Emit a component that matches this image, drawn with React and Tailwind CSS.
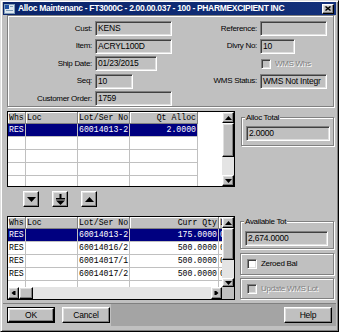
import React from 'react';

// Win classic bevels
const raised = 'border border-t-white border-l-white border-r-black border-b-black shadow-[inset_-1px_-1px_0_#808080,inset_1px_1px_0_#dfdfdf]';
const sunken = 'border border-t-[#808080] border-l-[#808080] border-r-white border-b-white shadow-[inset_1px_1px_0_#404040,inset_-1px_-1px_0_#dfdfdf]';
const etched = 'border border-[#808080] shadow-[inset_1px_1px_0_#fff,1px_1px_0_#fff]';
const mono = "font-['Liberation_Mono','Courier_New',monospace] text-[8.2px]";
const dis = 'text-[#808080] [text-shadow:1px_1px_0_#fff]';
const lbl = 'text-[8px] tracking-[-0.3px] whitespace-nowrap';

const Tri = ({ dir }) => (
  <svg width="7" height="4" viewBox="0 0 7 4">
    {dir === 'up' && <polygon points="3.5,0 7,4 0,4" fill="#000" />}
    {dir === 'down' && <polygon points="0,0 7,0 3.5,4" fill="#000" />}
    {dir === 'left' && <polygon points="4,0 4,7 0,3.5" fill="#000" transform="translate(1.5,-1.5)" />}
    {dir === 'right' && <polygon points="0,0 4,3.5 0,7" fill="#000" transform="translate(1.5,-1.5)" />}
  </svg>
);

const ScrollBtn = ({ dir, cls }) => (
  <div className={`${raised} ${cls} bg-[#c0c0c0] flex items-center justify-center shrink-0`}>
    <Tri dir={dir} />
  </div>
);

const Field = ({ w, children, white }) => (
  <div className={`${sunken} ${w} h-[15px] ${white ? 'bg-white' : 'bg-[#c0c0c0]'} pl-[2px] text-[8.5px] leading-[13px] whitespace-nowrap overflow-hidden tracking-[-0.2px]`}>
    {children}
  </div>
);

const Row = ({ label, lw, children }) => (
  <div className="flex items-center h-[15px]">
    <span className={`${lw} text-right pr-[3px] ${lbl}`}>{label}</span>
    {children}
  </div>
);

const Check = ({ disabled }) => (
  <div className={`${sunken} w-[10px] h-[10px] shrink-0 ${disabled ? 'bg-[#c0c0c0]' : 'bg-white'}`} />
);

const topCols = [
  { w: 'w-[18px]', label: 'Whs' },
  { w: 'w-[52px]', label: 'Loc' },
  { w: 'w-[52px]', label: 'Lot/Ser No' },
  { w: 'w-[68px]', label: 'Qt Alloc', right: true },
];
const topRows = [['RES', '', '60014013-2', '2.0000'], ['', '', '', ''], ['', '', '', ''], ['', '', '', ''], ['', '', '', '']];

const botCols = [
  { w: 'w-[18px]', label: 'Whs' },
  { w: 'w-[52px]', label: 'Loc' },
  { w: 'w-[52px]', label: 'Lot/Ser No' },
  { w: 'w-[89px]', label: 'Curr Qty', right: true },
  { w: 'w-[12px]', label: 'L' },
];
const botRows = [
  ['RES', '', '60014013-2', '175.0000', '0'],
  ['RES', '', '60014016/2', '500.0000', '0'],
  ['RES', '', '60014017/1', '500.0000', '0'],
  ['RES', '', '60014017/2', '500.0000', '0'],
  ['', '', '', '', ''],
];

const Grid = ({ cols, rows }) => (
  <div className={`flex-1 overflow-hidden bg-white ${mono}`}>
    <div className="flex h-[12px]">
      {cols.map((c, i) => (
        <div key={i} className={`${c.w} shrink-0 bg-[#c0c0c0] border-r border-b border-[#808080] shadow-[inset_1px_1px_0_#fff] px-[1px] leading-[11px] overflow-hidden whitespace-nowrap ${c.right ? 'text-right' : ''}`}>
          {c.label}
        </div>
      ))}
    </div>
    {rows.map((r, ri) => (
      <div key={ri} className="flex h-[13px]">
        {cols.map((c, i) => (
          <div key={i} className={`${c.w} shrink-0 border-r border-b border-[#c0c0c0] px-[1px] leading-[12px] overflow-hidden whitespace-nowrap ${c.right ? 'text-right' : ''} ${ri === 0 ? 'bg-[#000080] text-white' : ''}`}>
            {r[i]}
          </div>
        ))}
      </div>
    ))}
  </div>
);

const Legend = ({ children }) => (
  <legend className={`ml-[3px] px-[1px] bg-[#c0c0c0] ${lbl} leading-[9px]`}>{children}</legend>
);

const ArrowBtn = ({ children }) => (
  <div className={`${raised} w-[16px] h-[16px] bg-[#c0c0c0] flex items-center justify-center`}>{children}</div>
);

const Btn = ({ children, def }) => (
  <div className={`w-[48px] h-[16px] ${def ? 'border border-black' : ''}`}>
    <div className={`${raised} h-full bg-[#c0c0c0] flex items-center justify-center text-[8.5px] tracking-[-0.2px]`}>{children}</div>
  </div>
);

export default function App() {
  return (
    <div className="w-[339px] h-[332px] bg-[#c0c0c0] border border-t-[#dfdfdf] border-l-[#dfdfdf] border-r-black border-b-black shadow-[inset_1px_1px_0_#fff,inset_-1px_-1px_0_#808080] px-[2px] pt-[1px] flex flex-col text-black font-['Liberation_Sans',Arial,sans-serif] overflow-hidden">
      {/* title bar */}
      <div className="h-[13px] bg-gradient-to-r from-[#0a246a] to-[#13307a] flex items-center pl-[1px] pr-[2px] shrink-0">
        <svg width="11" height="10" viewBox="0 0 11 10" className="shrink-0">
          <rect x="0.5" y="0.5" width="10" height="9" fill="#dfe8f0" stroke="#7f9db9" />
          <rect x="1" y="1" width="4" height="4" fill="#1f4fa0" />
          <rect x="6" y="2" width="3" height="1" fill="#7f9db9" />
          <rect x="2" y="6" width="7" height="1" fill="#7f9db9" />
        </svg>
        <span className="ml-[3px] text-white font-bold text-[8.5px] tracking-[-0.32px] whitespace-nowrap leading-none">
          Alloc Maintenanc - FT3000C - 2.00.00.037 - 100 - PHARMEXCIPIENT INC
        </span>
        <div className={`${raised} ml-auto w-[12px] h-[10px] bg-[#c0c0c0] flex items-center justify-center`}>
          <svg width="6" height="5" viewBox="0 0 6 5">
            <path d="M0.5 0.5 L5.5 4.5 M5.5 0.5 L0.5 4.5" stroke="#000" strokeWidth="1.4" />
          </svg>
        </div>
      </div>

      <div className="flex flex-col pl-[4px] pr-[2px]">
        {/* header fields */}
        <div className={`${etched} h-[92px] flex pt-[5px]`}>
          <div className="w-[166px] flex flex-col gap-[2.5px]">
            <Row label="Cust:" lw="w-[87px]"><Field w="w-[77px]">KENS</Field></Row>
            <Row label="Item:" lw="w-[87px]"><Field w="w-[77px]">ACRYL100D</Field></Row>
            <Row label="Ship Date:" lw="w-[87px]"><Field w="w-[62px]">01/23/2015</Field></Row>
            <Row label="Seq:" lw="w-[87px]"><Field w="w-[38px]">10</Field></Row>
            <Row label="Customer Order:" lw="w-[87px]"><Field w="w-[77px]">1759</Field></Row>
          </div>
          <div className="flex-1 flex flex-col gap-[2.5px]">
            <Row label="Reference:" lw="w-[86px]"><Field w="w-[67px]" /></Row>
            <Row label="Dlvry No:" lw="w-[86px]"><Field w="w-[35px]">10</Field></Row>
            <div className="flex items-center h-[15px] pl-[87px]">
              <Check disabled />
              <span className={`ml-[4px] ${lbl} ${dis}`}>WMS Whs</span>
            </div>
            <Row label="WMS Status:" lw="w-[86px]"><Field w="w-[67px]">WMS Not Integr</Field></Row>
          </div>
        </div>

        {/* allocation grid */}
        <div className="flex mt-[4px]">
          <div className="w-[228px] h-[76px] border border-black flex">
            <Grid cols={topCols} rows={topRows} />
            <div className="w-[12px] flex flex-col bg-[#e4e4e4]">
              <ScrollBtn dir="up" cls="h-[11px]" />
              <div className={`${raised} h-[34px] bg-[#c0c0c0]`} />
              <div className="flex-1" />
              <ScrollBtn dir="down" cls="h-[11px]" />
            </div>
          </div>
          <fieldset className={`${etched} ml-[6px] mt-[2px] w-[93px] h-[33px] flex-1`}>
            <Legend>Alloc Total</Legend>
            <div className="ml-[4px] mt-[4px]"><Field w="w-[84px]">2.0000</Field></div>
          </fieldset>
        </div>

        {/* move buttons */}
        <div className="flex mt-[4px] pl-[16px] gap-[13px]">
          <ArrowBtn>
            <svg width="9" height="5" viewBox="0 0 9 5"><polygon points="0,0 9,0 4.5,5" fill="#000" /></svg>
          </ArrowBtn>
          <ArrowBtn>
            <svg width="9" height="11" viewBox="0 0 9 11">
              <rect x="3.5" y="0" width="2" height="4" fill="#000" />
              <rect x="0" y="4" width="9" height="1.5" fill="#000" />
              <polygon points="0,6.5 9,6.5 4.5,11" fill="#000" />
            </svg>
          </ArrowBtn>
          <ArrowBtn>
            <svg width="9" height="5" viewBox="0 0 9 5"><polygon points="4.5,0 9,5 0,5" fill="#000" /></svg>
          </ArrowBtn>
        </div>

        {/* stock grid */}
        <div className="flex mt-[9px]">
          <div className="w-[228px] h-[84px] border border-black flex flex-col">
            <div className="flex h-[70px]">
              <Grid cols={botCols} rows={botRows} />
              <div className="w-[12px] flex flex-col bg-[#e4e4e4]">
                <ScrollBtn dir="up" cls="h-[11px]" />
                <div className={`${raised} h-[32px] bg-[#c0c0c0]`} />
                <div className="flex-1" />
                <ScrollBtn dir="down" cls="h-[9px]" />
              </div>
            </div>
            <div className="flex h-[12px]">
              <ScrollBtn dir="left" cls="w-[11px]" />
              <div className={`${raised} w-[14px] bg-[#c0c0c0]`} />
              <div className="flex-1 bg-[#e4e4e4]" />
              <ScrollBtn dir="right" cls="w-[11px]" />
              <div className="w-[12px] bg-[#c0c0c0]" />
            </div>
          </div>
          <div className="ml-[5px] flex-1 flex flex-col">
            <fieldset className={`${etched} mt-[1px] h-[32px]`}>
              <Legend>Available Tot</Legend>
              <div className="ml-[4px] mt-[5px]"><Field w="w-[83px]">2,674.0000</Field></div>
            </fieldset>
            <div className={`${etched} mt-[4px] h-[22px] flex items-center pl-[6px]`}>
              <Check />
              <span className={`ml-[4px] ${lbl}`}>Zeroed Bal</span>
            </div>
            <div className={`${etched} mt-[3px] h-[21px] flex items-center pl-[6px]`}>
              <Check disabled />
              <span className={`ml-[4px] ${lbl} ${dis}`}>Update WMS Lot</span>
            </div>
          </div>
        </div>
      </div>

      {/* button bar */}
      <div className="mt-[3px] border-t border-[#808080] h-[23px] flex">
        <div className="flex items-center gap-[7px] pl-[4px] pr-[1px]">
          <Btn def>OK</Btn>
          <Btn>Cancel</Btn>
        </div>
        <div className="flex-1 bg-[#a4a4a4] flex items-center justify-end pr-[4px]">
          <Btn>Help</Btn>
        </div>
      </div>
    </div>
  );
}
